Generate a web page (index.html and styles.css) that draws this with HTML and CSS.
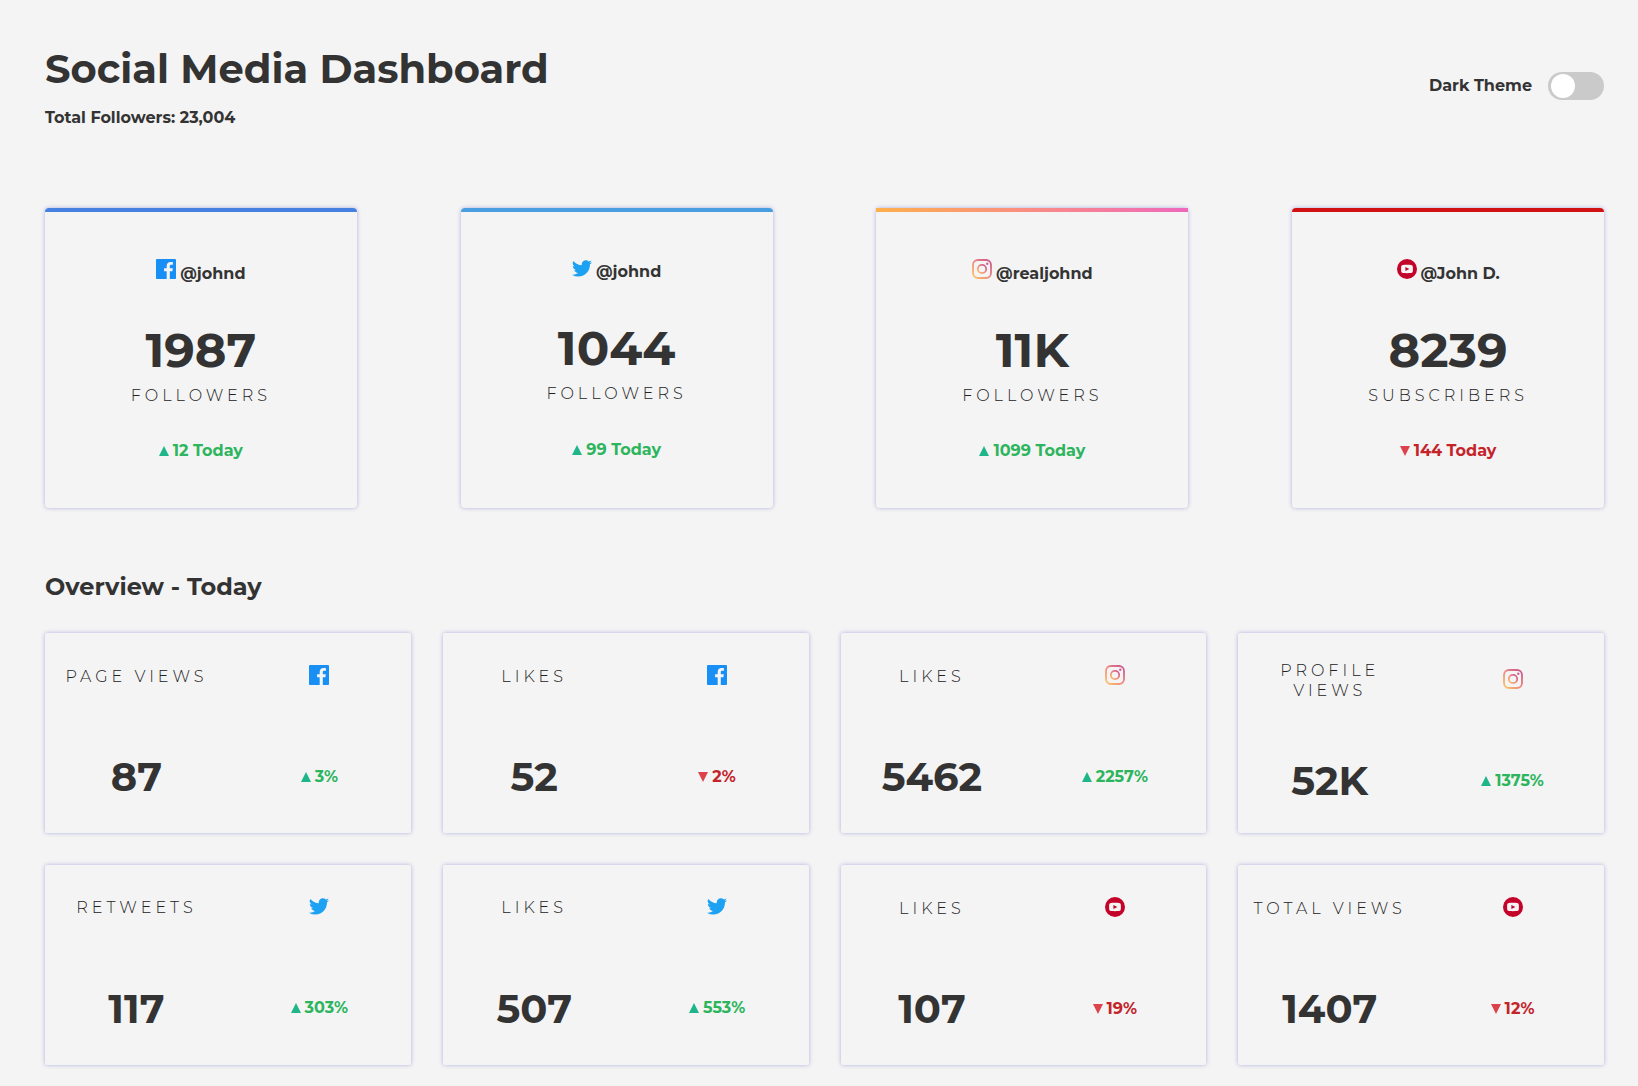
FILE: index.html
```html
<!DOCTYPE html>
<html lang="en">
<head>
<meta charset="utf-8">
<meta name="viewport" content="width=device-width, initial-scale=1">
<title>Social Media Dashboard</title>
<link rel="stylesheet" href="styles.css">
</head>
<body>
<svg class="sprite" aria-hidden="true">
  <defs>
    <linearGradient id="insta" x1="0%" y1="100%" x2="100%" y2="0%">
      <stop offset="0%" stop-color="#FDC468"/>
      <stop offset="50%" stop-color="#EE877E"/>
      <stop offset="100%" stop-color="#C9528F"/>
    </linearGradient>
  </defs>
  <symbol id="facebook" viewBox="0 0 20 20"><path fill="#178FF5" d="M18.896 0H1.104C.494 0 0 .494 0 1.104v17.793C0 19.506.494 20 1.104 20h9.58v-7.745H8.076V9.237h2.606V7.01c0-2.583 1.578-3.99 3.883-3.99 1.104 0 2.052.082 2.329.119v2.7h-1.598c-1.254 0-1.496.597-1.496 1.47v1.928h2.989l-.39 3.018h-2.6V20h5.098c.608 0 1.102-.494 1.102-1.104V1.104C20 .494 19.506 0 18.896 0z"/></symbol>
  <symbol id="twitter" viewBox="0 0 20 17"><path fill="#1DA1F2" d="M20 2.172a8.192 8.192 0 01-2.357.646 4.11 4.11 0 001.805-2.27 8.22 8.22 0 01-2.606.996A4.096 4.096 0 0013.847.248c-2.65 0-4.596 2.472-3.998 5.037A11.648 11.648 0 011.392.998a4.109 4.109 0 001.27 5.478 4.086 4.086 0 01-1.858-.513c-.045 1.9 1.318 3.679 3.291 4.075a4.113 4.113 0 01-1.853.07 4.106 4.106 0 003.833 2.849A8.25 8.25 0 010 14.658a11.616 11.616 0 006.29 1.843c7.618 0 11.922-6.434 11.662-12.205A8.354 8.354 0 0020 2.172z"/></symbol>
  <symbol id="instagram" viewBox="0 0 20 20">
    <rect x="1" y="1" width="18" height="18" rx="5" fill="none" stroke="url(#insta)" stroke-width="1.8"/>
    <circle cx="10" cy="10" r="4.2" fill="none" stroke="url(#insta)" stroke-width="1.8"/>
    <circle cx="15.3" cy="4.7" r="1.2" fill="#D0608A"/>
  </symbol>
  <symbol id="youtube" viewBox="0 0 20 20">
    <circle cx="10" cy="10" r="10" fill="#C4032B"/>
    <path fill="#F4F4F4" d="M15.8 7.8c-.1-1-.7-1.7-1.7-1.8C11.400 5.800 8.600 5.800 5.900 6c-1 .1-1.600.8-1.700 1.800a22 22 0 0 0 0 4.400c.1 1 .7 1.700 1.700 1.800 2.700.2 5.500.2 8.200 0 1-.1 1.600-.8 1.700-1.800a22 22 0 0 0 0-4.400z"/>
    <path fill="#C4032B" d="M8.400 7.900v4.200l4-2.100z"/>
  </symbol>
  <symbol id="up" viewBox="0 0 10 10"><path fill="#1EB589" d="M5 0l5 10H0z"/></symbol>
  <symbol id="down" viewBox="0 0 10 10"><path fill="#DC414C" d="M0 0h10L5 10z"/></symbol>
</svg>

<main class="page">
  <header class="header">
    <div>
      <h1 class="title">Social Media Dashboard</h1>
      <p class="total">Total Followers: 23,004</p>
    </div>
    <label class="theme" for="theme">Dark Theme
      <input class="switch" type="checkbox" role="switch" id="theme">
    </label>
  </header>

  <section class="accounts" aria-label="Accounts">
    <article class="card account facebook">
      <p class="handle"><svg class="icon"><use href="#facebook"/></svg>@johnd</p>
      <div><p class="count">1987</p><p class="label">Followers</p></div>
      <p class="change up"><svg class="arrow"><use href="#up"/></svg>12 Today</p>
    </article>
    <article class="card account twitter">
      <p class="handle"><svg class="icon bird"><use href="#twitter"/></svg>@johnd</p>
      <div><p class="count">1044</p><p class="label">Followers</p></div>
      <p class="change up"><svg class="arrow"><use href="#up"/></svg>99 Today</p>
    </article>
    <article class="card account instagram">
      <p class="handle"><svg class="icon"><use href="#instagram"/></svg>@realjohnd</p>
      <div><p class="count">11K</p><p class="label">Followers</p></div>
      <p class="change up"><svg class="arrow"><use href="#up"/></svg>1099 Today</p>
    </article>
    <article class="card account youtube">
      <p class="handle"><svg class="icon"><use href="#youtube"/></svg>@John D.</p>
      <div><p class="count">8239</p><p class="label">Subscribers</p></div>
      <p class="change down"><svg class="arrow"><use href="#down"/></svg>144 Today</p>
    </article>
  </section>

  <h2 class="subtitle">Overview - Today</h2>

  <section class="overview" aria-label="Overview">
    <article class="card stat">
      <p class="label">Page Views</p><svg class="icon"><use href="#facebook"/></svg>
      <p class="value">87</p><p class="change up"><svg class="arrow"><use href="#up"/></svg>3%</p>
    </article>
    <article class="card stat">
      <p class="label">Likes</p><svg class="icon"><use href="#facebook"/></svg>
      <p class="value">52</p><p class="change down"><svg class="arrow"><use href="#down"/></svg>2%</p>
    </article>
    <article class="card stat">
      <p class="label">Likes</p><svg class="icon"><use href="#instagram"/></svg>
      <p class="value">5462</p><p class="change up"><svg class="arrow"><use href="#up"/></svg>2257%</p>
    </article>
    <article class="card stat">
      <p class="label">Profile Views</p><svg class="icon"><use href="#instagram"/></svg>
      <p class="value">52K</p><p class="change up"><svg class="arrow"><use href="#up"/></svg>1375%</p>
    </article>
    <article class="card stat">
      <p class="label">Retweets</p><svg class="icon bird"><use href="#twitter"/></svg>
      <p class="value">117</p><p class="change up"><svg class="arrow"><use href="#up"/></svg>303%</p>
    </article>
    <article class="card stat">
      <p class="label">Likes</p><svg class="icon bird"><use href="#twitter"/></svg>
      <p class="value">507</p><p class="change up"><svg class="arrow"><use href="#up"/></svg>553%</p>
    </article>
    <article class="card stat">
      <p class="label">Likes</p><svg class="icon"><use href="#youtube"/></svg>
      <p class="value">107</p><p class="change down"><svg class="arrow"><use href="#down"/></svg>19%</p>
    </article>
    <article class="card stat">
      <p class="label">Total Views</p><svg class="icon"><use href="#youtube"/></svg>
      <p class="value">1407</p><p class="change down"><svg class="arrow"><use href="#down"/></svg>12%</p>
    </article>
  </section>
</main>
</body>
</html>
```
FILE: styles.css
```css
* {
  box-sizing: border-box;
}

body {
  margin: 0;
  background: #f4f4f4;
  color: #333;
  font-family: Montserrat, Inter, sans-serif;
  font-size: 16px;
  font-weight: 700;
  line-height: 20px;
}

h1,
h2,
p {
  margin: 0;
}

.sprite {
  position: absolute;
  width: 0;
  height: 0;
}

.page {
  padding: 44px 34px 21px 45px;
}

.header {
  display: flex;
  justify-content: space-between;
  align-items: center;
  margin-bottom: 80px;
}

.title {
  margin-bottom: 14px;
  font-size: 40px;
  line-height: 50px;
}

.theme {
  display: flex;
  align-items: center;
  gap: 16px;
}

.switch {
  appearance: none;
  display: flex;
  align-items: center;
  width: 56px;
  height: 28px;
  margin: 0;
  padding: 0 3px;
  border-radius: 14px;
  background: #cacaca;
  cursor: pointer;
}

.switch::before {
  content: "";
  width: 24px;
  height: 24px;
  border-radius: 50%;
  background: #fff;
}

.switch:checked {
  justify-content: flex-end;
  background: #2db55d;
}

.card {
  border-radius: 4px;
  box-shadow: 0 0 4px #b0b0e0;
}

.accounts {
  display: grid;
  grid-template-columns: repeat(4, 20%);
  justify-content: space-between;
}

.account {
  display: flex;
  flex-direction: column;
  justify-content: space-evenly;
  align-items: center;
  min-height: 300px;
  padding: 12px 0;
  border-top: 4px solid;
  text-align: center;
}

.facebook {
  border-color: #4680e0;
}

.twitter {
  border-color: #489ee0;
}

.instagram {
  border-image: linear-gradient(to right, #fdb04c, #fa8c84, #ee68bc) 1;
  border-width: 4px 0 0;
}

.youtube {
  border-color: #d01012;
}

.handle {
  display: flex;
  align-items: baseline;
  gap: 4px;
}

.icon {
  display: block;
  width: 20px;
  height: 20px;
}

.bird {
  height: 17px;
}

.count {
  margin-bottom: 6px;
  font-size: 48px;
  line-height: 60px;
}

.label {
  color: #222;
  font-weight: 300;
  letter-spacing: 4px;
  text-transform: uppercase;
}

.change {
  display: flex;
  align-items: baseline;
  gap: 4px;
}

.arrow {
  width: 10px;
  height: 10px;
}

.up {
  color: #2db55d;
}

.down {
  color: #c4232a;
}

.subtitle {
  margin: 63px 0 30px;
  font-size: 24px;
  line-height: 32px;
}

.overview {
  display: grid;
  grid-template-columns: repeat(4, 1fr);
  gap: 32px;
}

.stat {
  display: grid;
  grid-template-columns: 1fr 1fr;
  align-content: space-around;
  align-items: center;
  justify-items: center;
  min-height: 200px;
  border-radius: 2px;
  text-align: center;
}

.stat .label {
  padding: 0 4px;
}

.stat .icon {
  margin-bottom: 4px;
}

.value {
  font-size: 40px;
  line-height: 49px;
}
```
